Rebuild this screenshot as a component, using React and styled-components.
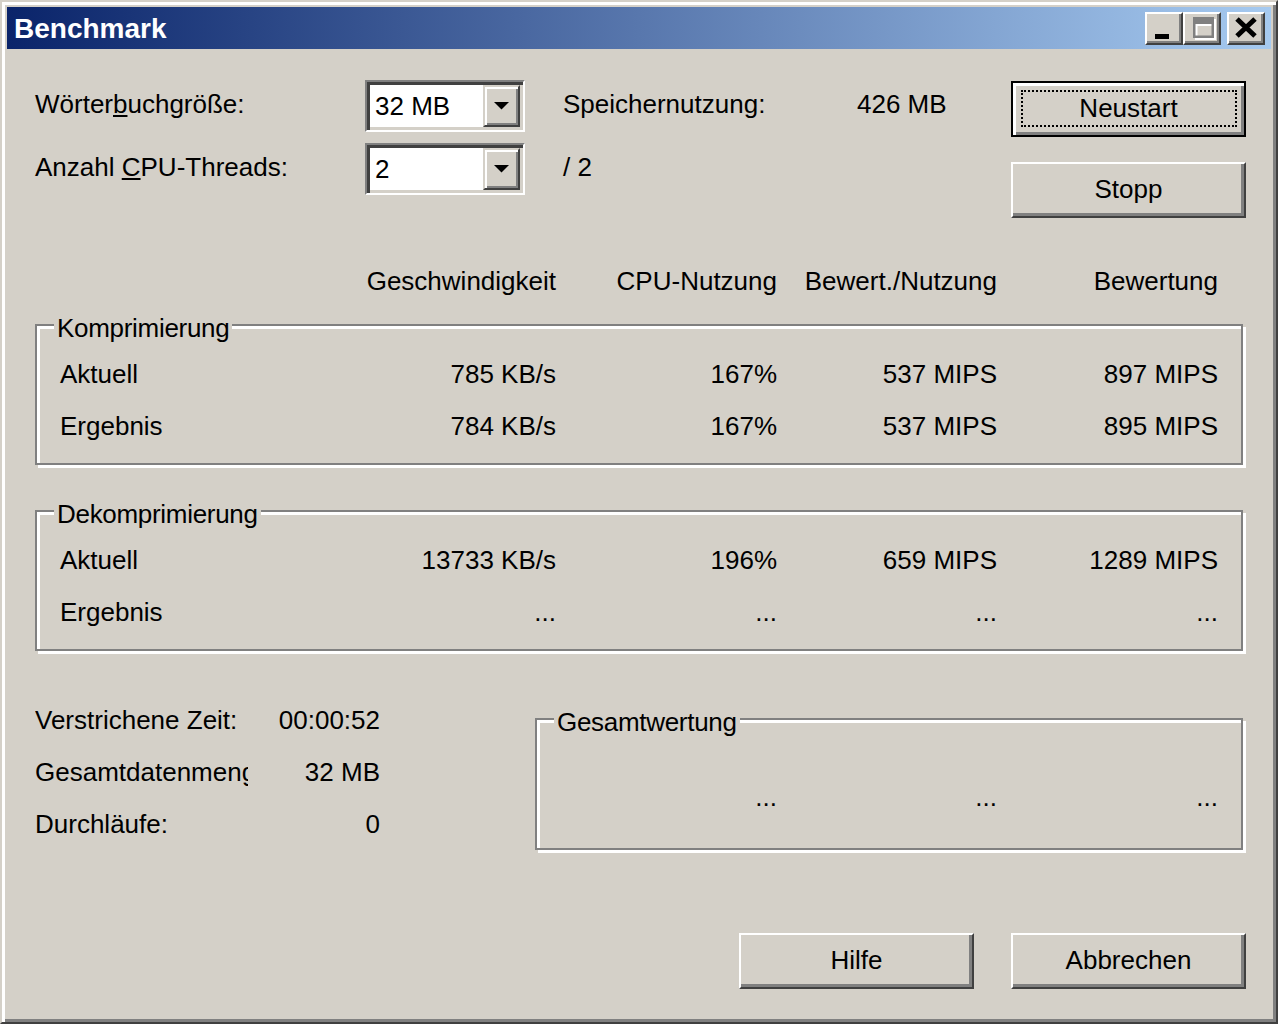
import React from 'react';
import styled, { createGlobalStyle } from 'styled-components';

const GlobalStyle = createGlobalStyle`
  html, body {
    margin: 0;
    padding: 0;
    background: #d4d0c8;
  }
  * {
    box-sizing: border-box;
  }
`;

const Window = styled.div`
  width: 1278px;
  height: 1024px;
  display: flex;
  flex-direction: column;
  padding: 5px;
  background: #d4d0c8;
  border: 2px solid;
  border-color: #d4d0c8 #404040 #404040 #d4d0c8;
  box-shadow: inset 3px 3px 0 #fff, inset -3px -3px 0 #808080;
  font-family: "Liberation Sans", Arial, sans-serif;
  font-size: 26px;
  color: #000;
`;

const TitleBar = styled.div`
  height: 42px;
  flex: none;
  display: flex;
  align-items: center;
  padding: 0 6px 0 7px;
  background: linear-gradient(to right, #0a246a, #a6caf0);
`;

const TitleText = styled.div`
  flex: 1;
  color: #fff;
  font-weight: bold;
  font-size: 28px;
  line-height: 42px;
  padding-top: 2px;
`;

const CaptionButtons = styled.div`
  display: flex;
  align-items: center;
`;

const CaptionButton = styled.div`
  width: 38px;
  height: 33px;
  margin-left: ${(p) => (p.$gap ? '6px' : '0')};
  background: #d4d0c8;
  border: 2px solid;
  border-color: #fff #404040 #404040 #fff;
  box-shadow: inset -2px -2px 0 #808080;
  display: flex;
  align-items: center;
  justify-content: center;

  svg {
    display: block;
  }
`;

const Body = styled.div`
  flex: 1;
  display: flex;
  flex-direction: column;
  padding: 31px 25px 0 28px;
`;

const TopArea = styled.div`
  display: flex;
  justify-content: space-between;
  align-items: flex-start;
`;

const Settings = styled.div`
  display: grid;
  grid-template-columns: 330px 160px 38px 294px auto;
  grid-auto-rows: 52px;
  row-gap: 11px;
  align-items: center;
  white-space: nowrap;
`;

const Text = styled.span`
  line-height: 30px;
  padding-bottom: 5px;
`;

const Combo = styled.div`
  height: 52px;
  display: flex;
  align-items: stretch;
  background: #fff;
  border: 2px solid;
  border-color: #808080 #fff #fff #808080;
  box-shadow: inset 3px 3px 0 #404040, inset -3px -3px 0 #d4d0c8;
  padding: 3px;
`;

const ComboText = styled.div`
  flex: 1;
  padding-left: 5px;
  line-height: 42px;
`;

const DropButton = styled.div`
  width: 37px;
  background: #d4d0c8;
  border: 2px solid;
  border-color: #d4d0c8 #404040 #404040 #d4d0c8;
  box-shadow: inset 2px 2px 0 #fff, inset -2px -2px 0 #808080;
  display: flex;
  align-items: center;
  justify-content: center;
`;

const ButtonColumn = styled.div`
  display: flex;
  flex-direction: column;
  gap: 25px;
  padding-top: 1px;
`;

const PushButton = styled.div`
  position: relative;
  width: 235px;
  height: 56px;
  display: flex;
  align-items: center;
  justify-content: center;
  padding-bottom: 2px;
  background: #d4d0c8;
  border: 2px solid;
  border-color: ${(p) => (p.$default ? '#000' : '#fff #404040 #404040 #fff')};
  box-shadow: ${(p) =>
    p.$default
      ? 'inset 3px 3px 0 #fff, inset -3px -3px 0 #808080'
      : 'inset -3px -3px 0 #808080'};

  ${(p) =>
    p.$default &&
    `
    &::after {
      content: '';
      position: absolute;
      top: 7px;
      left: 8px;
      right: 7px;
      bottom: 8px;
      border: 2px dotted #000;
    }
  `}
`;

const Columns = styled.div`
  display: grid;
  grid-template-columns: 1fr 220px 221px 220px 221px;
  grid-auto-rows: ${(p) => (p.$header ? '30px' : '52px')};
  align-items: center;
  white-space: nowrap;
  line-height: 30px;
  ${(p) => p.$header && 'margin-top: 48px; padding: 0 28px 0 25px;'}
`;

const Cell = styled.div`
  text-align: ${(p) => (p.$left ? 'left' : 'right')};
`;

const Group = styled.div`
  position: relative;
  width: ${(p) => p.$width || '1208px'};
  height: ${(p) => p.$height || '141px'};
  margin-top: ${(p) => p.$top || '0'};
  margin-left: ${(p) => p.$left || '0'};
  padding: ${(p) => p.$pad || '22px 23px 0 23px'};
  border: 2px solid #808080;
  box-shadow: inset 3px 3px 0 #fff, 3px 3px 0 #fff;
`;

const GroupLabel = styled.div`
  position: absolute;
  top: -13px;
  left: 17px;
  padding: 0 3px;
  line-height: 30px;
  background: #d4d0c8;
  white-space: nowrap;
  letter-spacing: -0.3px;
`;

const BottomArea = styled.div`
  display: flex;
  align-items: flex-start;
  margin-top: 43px;
`;

const Stats = styled.div`
  display: grid;
  grid-template-columns: 213px 132px;
  grid-auto-rows: 52px;
  align-items: center;
  line-height: 30px;
  white-space: nowrap;
`;

const StatLabel = styled.div`
  overflow: hidden;
`;

const StatValue = styled.div`
  text-align: right;
`;

const TotalRow = styled.div`
  display: grid;
  grid-template-columns: 221px 220px 221px;
  justify-content: end;
  line-height: 52px;
  text-align: right;
`;

const Footer = styled.div`
  display: flex;
  justify-content: flex-end;
  gap: 37px;
  margin-top: 83px;
`;

const MinimizeGlyph = () => (
  <svg width="34" height="29" viewBox="0 0 34 29">
    <rect x="8" y="20" width="14" height="5" fill="#000" />
  </svg>
);

const MaximizeGlyph = () => (
  <svg width="34" height="29" viewBox="0 0 34 29">
    <path d="M10 5h21v21h-21z M12.5 12h16v11.5h-16z" fill="#fff" fillRule="evenodd" />
    <path d="M8 3h21v21h-21z M10.5 10h16v11.5h-16z" fill="#808080" fillRule="evenodd" />
  </svg>
);

const CloseGlyph = () => (
  <svg width="34" height="29" viewBox="0 0 34 29">
    <path d="M8 5 L26 22 M26 5 L8 22" stroke="#000" strokeWidth="5" />
  </svg>
);

const Arrow = () => (
  <svg width="15" height="8" viewBox="0 0 15 8">
    <polygon points="0,0 15,0 7.5,7.5" fill="#000" />
  </svg>
);

const ComboBox = ({ value }) => (
  <Combo>
    <ComboText>{value}</ComboText>
    <DropButton>
      <Arrow />
    </DropButton>
  </Combo>
);

const headers = ['Geschwindigkeit', 'CPU-Nutzung', 'Bewert./Nutzung', 'Bewertung'];

const compression = [
  ['Aktuell', '785 KB/s', '167%', '537 MIPS', '897 MIPS'],
  ['Ergebnis', '784 KB/s', '167%', '537 MIPS', '895 MIPS'],
];

const decompression = [
  ['Aktuell', '13733 KB/s', '196%', '659 MIPS', '1289 MIPS'],
  ['Ergebnis', '...', '...', '...', '...'],
];

const stats = [
  ['Verstrichene Zeit:', '00:00:52'],
  ['Gesamtdatenmenge:', '32 MB'],
  ['Durchläufe:', '0'],
];

const ResultRows = ({ rows }) => (
  <Columns>
    {rows.map((row) =>
      row.map((value, i) => (
        <Cell key={row[0] + i} $left={i === 0}>
          {value}
        </Cell>
      ))
    )}
  </Columns>
);

export default function App() {
  return (
    <>
      <GlobalStyle />
      <Window>
        <TitleBar>
          <TitleText>Benchmark</TitleText>
          <CaptionButtons>
            <CaptionButton>
              <MinimizeGlyph />
            </CaptionButton>
            <CaptionButton>
              <MaximizeGlyph />
            </CaptionButton>
            <CaptionButton $gap>
              <CloseGlyph />
            </CaptionButton>
          </CaptionButtons>
        </TitleBar>

        <Body>
          <TopArea>
            <Settings>
              <Text>
                Wörter<u>b</u>uchgröße:
              </Text>
              <ComboBox value="32 MB" />
              <span />
              <Text>Speichernutzung:</Text>
              <Text>426 MB</Text>

              <Text>
                Anzahl <u>C</u>PU-Threads:
              </Text>
              <ComboBox value="2" />
              <span />
              <Text>/ 2</Text>
              <span />
            </Settings>
            <ButtonColumn>
              <PushButton $default>Neustart</PushButton>
              <PushButton>Stopp</PushButton>
            </ButtonColumn>
          </TopArea>

          <Columns $header>
            <span />
            {headers.map((h) => (
              <Cell key={h}>{h}</Cell>
            ))}
          </Columns>

          <Group $top="28px">
            <GroupLabel>Komprimierung</GroupLabel>
            <ResultRows rows={compression} />
          </Group>

          <Group $top="45px">
            <GroupLabel>Dekomprimierung</GroupLabel>
            <ResultRows rows={decompression} />
          </Group>

          <BottomArea>
            <Stats>
              {stats.map(([label, value]) => (
                <React.Fragment key={label}>
                  <StatLabel>{label}</StatLabel>
                  <StatValue>{value}</StatValue>
                </React.Fragment>
              ))}
            </Stats>
            <Group $width="708px" $height="132px" $top="24px" $left="155px" $pad="51px 23px 0 0">
              <GroupLabel>Gesamtwertung</GroupLabel>
              <TotalRow>
                <span>...</span>
                <span>...</span>
                <span>...</span>
              </TotalRow>
            </Group>
          </BottomArea>

          <Footer>
            <PushButton>Hilfe</PushButton>
            <PushButton>Abbrechen</PushButton>
          </Footer>
        </Body>
      </Window>
    </>
  );
}
